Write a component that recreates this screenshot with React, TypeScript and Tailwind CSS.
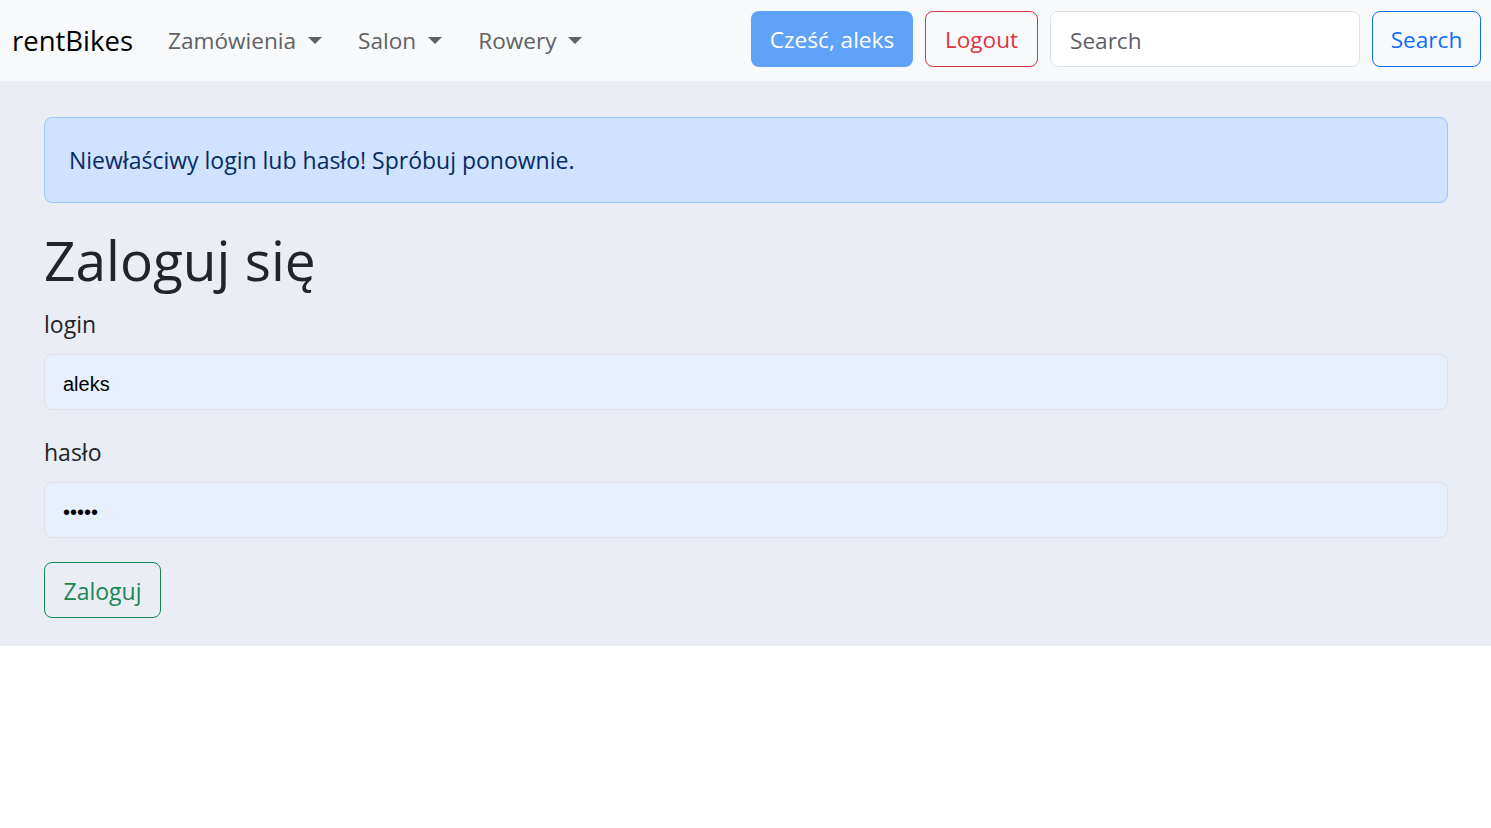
import React from "react";

function Caret() {
  return (
    <svg width="14" height="8" viewBox="0 0 14 8" className="ml-[12px] mt-[2px]">
      <path d="M0 0 L14 0 L7 7 Z" fill="currentColor" />
    </svg>
  );
}

function NavLink({ label }: { label: string }) {
  return (
    <a className="flex items-center px-[12px] text-[22.6px] text-[#5f6164]" href="#">
      {label}
      <Caret />
    </a>
  );
}

export default function App() {
  return (
    <div className="min-h-[828px] bg-white font-['Open_Sans',sans-serif]">
      <nav className="flex h-[81px] items-center bg-[#f8f9fa] pl-[12px] pr-[10px]">
        <a href="#" className="mr-[23px] text-[27.5px] text-black">rentBikes</a>
        <div className="flex gap-[12px]">
          <NavLink label="Zamówienia" />
          <NavLink label="Salon" />
          <NavLink label="Rowery" />
        </div>
        <div className="ml-auto mb-[4px] flex items-center gap-[12px]">
          <button className="h-[56px] w-[162px] rounded-[8px] bg-[#5fa2fa] pt-[3px] text-[22.6px] text-white">Cześć, aleks</button>
          <button className="h-[56px] w-[113px] rounded-[8px] border border-[#dc3545] pt-[3px] text-[22.6px] text-[#dc3545]">Logout</button>
          <input
            placeholder="Search"
            className="h-[56px] w-[310px] rounded-[8px] border border-[#dee2e6] bg-white px-[19px] pt-[3px] text-[22.6px] text-[#212529] placeholder:text-[#5c6066] outline-none"
          />
          <button className="h-[56px] w-[109px] rounded-[8px] border border-[#0d6efd] pt-[3px] text-[22.6px] text-[#0d6efd]">Search</button>
        </div>
      </nav>
      <main className="bg-[#eaedf4] pl-[44px] pr-[43px] pt-[36px] pb-[28px]">
        <div className="flex h-[86px] items-center rounded-[8px] border border-[#9ec5fe] bg-[#cfe2ff] px-[24px] text-[23px] text-[#052c65]">
          Niewłaściwy login lub hasło! Spróbuj ponownie.
        </div>
        <h1 className="mt-[24px] mb-[13px] text-[55px] font-medium leading-[66px] text-[#212529]">Zaloguj się</h1>
        <form className="flex flex-col">
          <label className="mb-[12px] text-[23px] leading-[36px] text-[#212529]">login</label>
          <input
            defaultValue="aleks"
            className="mb-[24px] h-[56px] rounded-[8px] border border-[#dee2e6] bg-[#e8f0fe] px-[18px] pt-[5px] font-['Liberation_Sans',sans-serif] text-[20px] text-black outline-none"
          />
          <label className="mb-[12px] text-[23px] leading-[36px] text-[#212529]">hasło</label>
          <input
            type="password"
            defaultValue="aaaaa"
            className="mb-[24px] h-[56px] rounded-[8px] border border-[#dee2e6] bg-[#e8f0fe] px-[18px] pt-[4px] font-['Liberation_Sans',sans-serif] text-[20px] text-black outline-none"
          />
          <div>
            <button type="button" className="h-[56px] w-[117px] rounded-[8px] border border-[#198754] pt-[2px] text-[23px] text-[#198754]">
              Zaloguj
            </button>
          </div>
        </form>
      </main>
    </div>
  );
}
